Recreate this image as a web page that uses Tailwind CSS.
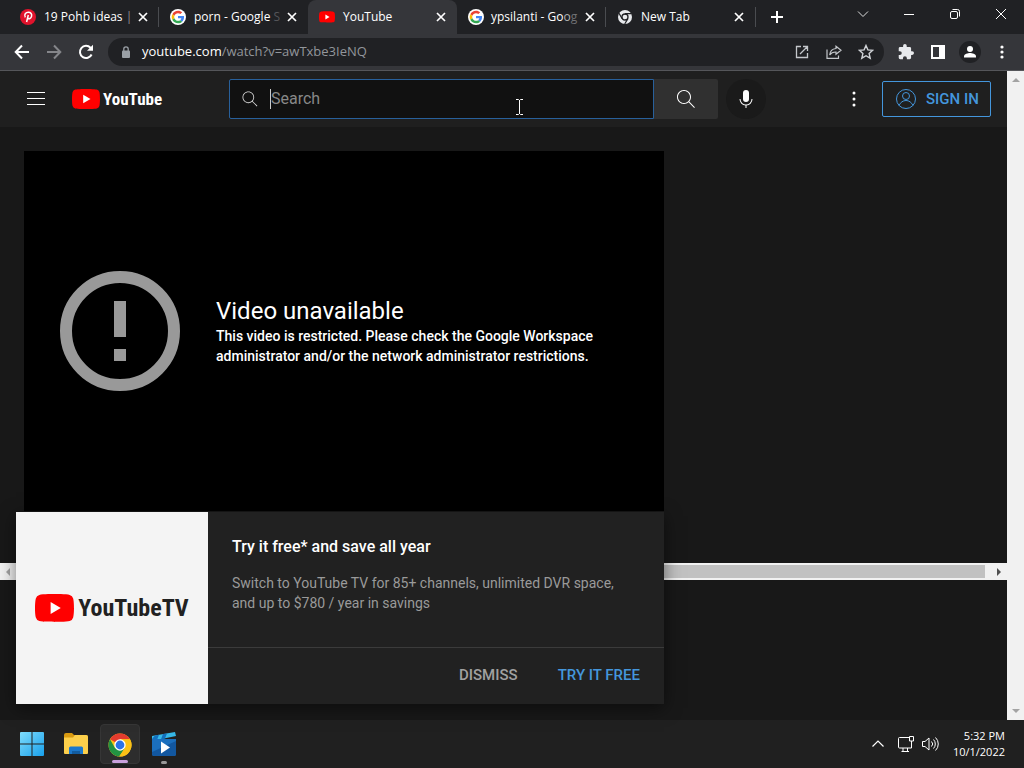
<!DOCTYPE html>
<html lang="en">
<head>
    <meta charset="UTF-8">
    <meta name="viewport" content="width=device-width, initial-scale=1.0">
    <title>YouTube</title>
    <script src="https://cdn.jsdelivr.net/npm/@tailwindcss/browser@4"></script>
</head>
<body class="h-screen flex flex-col overflow-hidden bg-[#181818] text-white font-['Roboto',sans-serif]">

    <!-- Shared icons -->
    <svg class="hidden">
        <symbol id="close" viewBox="0 0 10 10"><path d="M1 1l8 8M9 1l-8 8" stroke="currentColor" stroke-width="1.7" fill="none"/></symbol>
        <symbol id="google" viewBox="0 0 48 48">
            <circle cx="24" cy="24" r="24" fill="#fff"/>
            <g transform="translate(5 5) scale(.79)">
                <path fill="#EA4335" d="M24 9.5c3.5 0 6.700 1.200 9.200 3.600l6.900-6.900C35.900 2.400 30.500 0 24 0 14.600 0 6.500 5.400 2.600 13.200l8 6.200C12.400 13.700 17.700 9.500 24 9.500z"/>
                <path fill="#4285F4" d="M47 24.500c0-1.600-.2-3.100-.4-4.500H24v9h12.900c-.6 3-2.300 5.500-4.800 7.200l7.700 6C44.400 38 47 31.800 47 24.500z"/>
                <path fill="#FBBC05" d="M10.500 28.600c-.5-1.500-.8-3-.8-4.600s.3-3.100.8-4.600l-8-6.200C.9 16.500 0 20.100 0 24s.9 7.500 2.600 10.800z"/>
                <path fill="#34A853" d="M24 48c6.500 0 11.900-2.100 15.900-5.800l-7.700-6c-2.200 1.500-4.900 2.300-8.200 2.300-6.300 0-11.600-4.200-13.500-9.900l-8 6.200C6.500 42.600 14.600 48 24 48z"/>
            </g>
        </symbol>
        <symbol id="play" viewBox="0 0 28 20">
            <path fill="#f00" d="M27.400 3.100A3.500 3.500 0 0 0 24.900.6C22.700 0 14 0 14 0S5.300 0 3.100.6A3.500 3.500 0 0 0 .6 3.100C0 5.300 0 10 0 10s0 4.700.6 6.900a3.500 3.500 0 0 0 2.500 2.500C5.300 20 14 20 14 20s8.700 0 10.900-.6a3.500 3.500 0 0 0 2.500-2.500C28 14.700 28 10 28 10s0-4.700-.6-6.900z"/>
            <path fill="#fff" d="M11.200 14.300V5.700l7.300 4.300z"/>
        </symbol>
        <symbol id="search" viewBox="0 0 24 24"><path fill="currentColor" d="M20.870 20.170l-5.590-5.590C16.350 13.350 17 11.750 17 10c0-3.870-3.130-7-7-7s-7 3.130-7 7 3.130 7 7 7c1.750 0 3.350-.65 4.580-1.710l5.590 5.590.7-.71zM10 16c-3.310 0-6-2.690-6-6s2.690-6 6-6 6 2.690 6 6-2.690 6-6 6z"/></symbol>
    </svg>

    <!-- Tab strip -->
    <div class="h-[34px] shrink-0 flex bg-[#202124] pl-[10px] text-xs font-['Open_Sans',sans-serif]">
        <div class="w-[149px] flex items-center pl-[10px] pr-[11px]">
            <svg class="w-4 h-4 shrink-0" viewBox="0 0 16 16"><circle cx="8" cy="8" r="8" fill="#e0132c"/><path d="M5.300 8.300C3.700 5.500 5.800 3.300 8.300 3.300c2.700 0 3.700 1.900 3.300 3.800-.5 2.500-2.700 3.400-3.900 1.900M8.300 6L6.600 13" fill="none" stroke="#fff" stroke-width="1.500"/></svg>
            <span class="ml-2 whitespace-nowrap">19 Pohb ideas <span class="text-[#909194]">|</span></span>
            <button aria-label="Close tab" class="ml-auto"><svg class="w-[10px] h-[10px]"><use href="#close"/></svg></button>
        </div>
        <div class="w-[149px] flex items-center pl-[11px] pr-[11px]">
            <div class="absolute w-px h-5 bg-[#4a4c50] -ml-3"></div>
            <svg class="w-4 h-4 shrink-0"><use href="#google"/></svg>
            <span class="ml-2 whitespace-nowrap">porn - Google <span class="text-[#55565a]">S</span></span>
            <button aria-label="Close tab" class="ml-auto"><svg class="w-[10px] h-[10px]"><use href="#close"/></svg></button>
        </div>
        <div class="w-[149px] flex items-center pl-[11px] pr-[11px] bg-[#35363a] rounded-t-lg">
            <svg class="w-4 h-[12px] shrink-0"><use href="#play"/></svg>
            <span class="ml-2 whitespace-nowrap">YouTube</span>
            <button aria-label="Close tab" class="ml-auto"><svg class="w-[10px] h-[10px]"><use href="#close"/></svg></button>
        </div>
        <div class="w-[149px] flex items-center pl-[11px] pr-[11px]">
            <svg class="w-4 h-4 shrink-0"><use href="#google"/></svg>
            <span class="ml-[7px] whitespace-nowrap">ypsilanti - Go<span class="text-[#b0b1b3]">o</span><span class="text-[#707174]">g</span></span>
            <button aria-label="Close tab" class="ml-auto"><svg class="w-[10px] h-[10px]"><use href="#close"/></svg></button>
        </div>
        <div class="w-[149px] flex items-center pl-[11px] pr-[11px]">
            <div class="absolute w-px h-5 bg-[#4a4c50] -ml-3"></div>
            <svg class="w-4 h-4 shrink-0" viewBox="0 0 16 16"><circle cx="8" cy="8" r="7" fill="#e8eaed"/><circle cx="8" cy="8" r="3" fill="#e8eaed" stroke="#202124" stroke-width="1.300"/><path d="M8 4.700h6.500M5.100 9.600L2 4.200M10.900 9.600L7.700 15" stroke="#202124" stroke-width="1.200"/></svg>
            <span class="ml-2 whitespace-nowrap">New Tab</span>
            <button aria-label="Close tab" class="ml-auto"><svg class="w-[10px] h-[10px]"><use href="#close"/></svg></button>
        </div>
        <div class="w-px h-5 bg-[#4a4c50] self-center"></div>
        <button aria-label="New tab" class="ml-[14px]"><svg class="w-[14px] h-[14px]" viewBox="0 0 14 14"><path d="M7 1v12M1 7h12" stroke="#fff" stroke-width="2"/></svg></button>
        <div class="ml-auto flex items-center pr-[17px] pb-[6px]">
            <button aria-label="Search tabs"><svg class="w-3 h-3" viewBox="0 0 12 12"><path d="M1 3.500l5 5 5-5" fill="none" stroke="#ddd"/></svg></button>
            <button aria-label="Minimize" class="ml-[34px]"><svg class="w-3 h-3" viewBox="0 0 12 12"><path d="M1 6.500h10" stroke="#fff"/></svg></button>
            <button aria-label="Restore" class="ml-[34px]"><svg class="w-3 h-3" viewBox="0 0 12 12"><rect x="1.500" y="3.500" width="7" height="7" rx="1.500" fill="none" stroke="#fff"/><path d="M3.500 1.500H8.500a2 2 0 0 1 2 2V8.500" fill="none" stroke="#fff"/></svg></button>
            <button aria-label="Close window" class="ml-[34px]"><svg class="w-3 h-3" viewBox="0 0 12 12"><path d="M1 1l10 10M11 1L1 11" stroke="#fff"/></svg></button>
        </div>
    </div>

    <!-- Toolbar -->
    <div class="h-[37px] shrink-0 flex items-center bg-[#35363a] border-b border-[#55565a] pl-[14px] pr-[14px] gap-4 text-[#e8eaed]">
        <button aria-label="Back"><svg class="w-4 h-4" viewBox="0 0 16 16"><path d="M15 8H2M8 1.500L1.700 8 8 14.500" fill="none" stroke="#fff" stroke-width="2"/></svg></button>
        <button aria-label="Forward"><svg class="w-4 h-4" viewBox="0 0 16 16"><path d="M1 8h13M8 1.500L14.300 8 8 14.500" fill="none" stroke="#85868a" stroke-width="2"/></svg></button>
        <button aria-label="Reload"><svg class="w-4 h-4" viewBox="0 0 16 16"><path d="M13.600 10.500A6.100 6.100 0 1 1 12.500 3.800l1.500 1.700" fill="none" stroke="#fff" stroke-width="2"/><path d="M15 .8v6H9z" fill="#fff"/></svg></button>
        <div class="flex-1 h-7 -ml-[2px] -mr-[2px] flex items-center rounded-full bg-[#202124] pl-3 pr-[10px] font-['Open_Sans',sans-serif]">
            <svg class="w-3 h-3 shrink-0" viewBox="0 0 12 12"><rect x="2" y="4.500" width="8" height="7.500" rx="1" fill="#9aa0a6"/><path d="M3.800 5V3a2.200 2.200 0 0 1 4.400 0v2" fill="none" stroke="#9aa0a6" stroke-width="1.300"/></svg>
            <span class="ml-[10px] text-[13px] flex-1 text-[#92969b]"><span class="text-white">youtube.com</span>/watch?v=awTxbe3IeNQ</span>
            <div class="flex gap-4">
                <svg class="w-4 h-4" viewBox="0 0 16 16" fill="none" stroke="#c4c7cb" stroke-width="1.300"><path d="M7 2.500H2.500v11h11V9M9 2.500h4.500V7M13.500 2.500L6 10"/></svg>
                <svg class="w-4 h-4" viewBox="0 0 16 16" fill="none" stroke="#c4c7cb" stroke-width="1.200"><path d="M1 5.500v8.900h11.500V11.500M10 2.200l5 4-5 4V8C7 7.900 5 9 3.700 11 4 7.500 6.200 4.900 10 4.500z"/></svg>
                <svg class="w-4 h-4" viewBox="0 0 16 16" fill="none" stroke="#d0d3d7" stroke-width="1.400"><path d="M8 1.500l1.900 4.400 4.800.4-3.600 3.200 1.100 4.700L8 11.700l-4.200 2.500 1.100-4.700L1.300 6.300l4.800-.4z"/></svg>
            </div>
        </div>
        <button aria-label="Extensions"><svg class="w-4 h-4" viewBox="1 1 22 22"><path fill="#e8eaed" d="M20.500 11H19V7a2 2 0 0 0-2-2h-4V3.500a2.500 2.500 0 0 0-5 0V5H4a2 2 0 0 0-2 2v3.800h1.500a2.700 2.700 0 0 1 0 5.400H2V20a2 2 0 0 0 2 2h3.800v-1.500a2.700 2.700 0 0 1 5.400 0V22H17a2 2 0 0 0 2-2v-4h1.500a2.500 2.500 0 0 0 0-5z"/></svg></button>
        <button aria-label="Side panel"><svg class="w-4 h-4" viewBox="0 0 16 16"><path fill="#fff" fill-rule="evenodd" d="M1 1h14v14H1zM3 3v10h6V3z"/></svg></button>
        <button aria-label="Profile" class="-mx-[3px]"><svg class="w-[22px] h-[22px]" viewBox="0 0 22 22"><circle cx="11" cy="11" r="11" fill="#202124"/><circle cx="11" cy="8" r="3" fill="#fff"/><path d="M5 16.500v-1.300c0-2 4-3.100 6-3.100s6 1.100 6 3.100v1.300z" fill="#fff"/></svg></button>
        <button aria-label="Menu"><svg class="w-4 h-4" viewBox="0 0 16 16" fill="#fff"><circle cx="8" cy="3" r="1.600"/><circle cx="8" cy="8" r="1.600"/><circle cx="8" cy="13" r="1.600"/></svg></button>
    </div>

    <!-- Page -->
    <div class="flex-1 min-h-0 flex">
        <div class="relative flex-1 min-w-0 flex flex-col">
            <header class="h-14 shrink-0 flex items-center px-4 bg-[#1f1f1f]">
                <div class="w-[213px] shrink-0 flex items-center pl-2">
                    <button aria-label="Guide"><svg class="w-6 h-6" viewBox="0 0 24 24"><path d="M3 5.500h18M3 11.500h18M3 17.500h18" stroke="#fff"/></svg></button>
                    <a href="#" aria-label="YouTube home" class="ml-6 flex items-center gap-[3px]">
                        <svg class="w-7 h-5"><use href="#play"/></svg>
                        <span class="text-[17px] leading-5 font-bold font-['Liberation_Sans_Narrow','Roboto_Condensed',sans-serif]">YouTube</span>
                    </a>
                </div>
                <form class="flex-1 flex h-10">
                    <label class="flex-1 min-w-0 flex items-center bg-[#111111] border border-[#28609b] rounded-l-xs">
                        <svg class="w-5 h-5 ml-[10px] shrink-0 text-[#ddd]"><use href="#search"/></svg>
                        <input type="text" aria-label="Search" placeholder="Search" class="ml-[10px] flex-1 min-w-0 bg-transparent border-l border-[#ccc] h-5 text-base outline-none placeholder:text-[#888]">
                    </label>
                    <button type="button" aria-label="Search" class="w-16 flex items-center justify-center bg-[#303030] rounded-r-xs"><svg class="w-6 h-6"><use href="#search"/></svg></button>
                </form>
                <button aria-label="Search with your voice" class="ml-2 w-10 h-10 rounded-full bg-[#1a1a1a] flex items-center justify-center"><svg class="w-6 h-6" viewBox="0 0 24 24" fill="#fff"><rect x="9" y="3" width="6" height="12" rx="3"/><path d="M18.500 12h-1a5.500 5.500 0 0 1-11 0h-1a6.500 6.500 0 0 0 6 6.500V21h1v-2.500a6.500 6.500 0 0 0 6-6.500z"/></svg></button>
                <div class="w-[225px] shrink-0 flex items-center justify-end gap-4">
                    <button aria-label="Settings"><svg class="w-6 h-6" viewBox="0 0 24 24" fill="#fff"><circle cx="12" cy="6" r="1.500"/><circle cx="12" cy="12" r="1.500"/><circle cx="12" cy="18" r="1.500"/></svg></button>
                    <a href="#" class="w-[109px] h-9 flex items-center gap-2 pl-[11px] whitespace-nowrap border border-[#4496dc] rounded-xs text-[15px] font-medium text-[#4496dc]">
                        <svg class="w-6 h-6 shrink-0" viewBox="0 0 24 24" fill="none" stroke="currentColor"><circle cx="12" cy="12" r="9.500"/><circle cx="12" cy="9" r="3.500"/><path d="M5 18.500c1.500-3.200 4-5 7-5s5.500 1.800 7 5"/></svg>
                        SIGN IN
                    </a>
                </div>
            </header>

            <main class="flex-1 min-h-0 flex flex-col">
                <div class="h-[436px] shrink-0 overflow-hidden pt-6 pl-6">
                    <section class="w-[640px] h-[360px] bg-black flex items-center gap-9 pl-9">
                        <svg class="w-[120px] h-[120px] shrink-0" viewBox="0 0 120 120"><circle cx="60" cy="60" r="54" fill="none" stroke="#999" stroke-width="12"/><path d="M54 30h12v36H54zM54 78h12v12H54z" fill="#999"/></svg>
                        <div>
                            <h1 class="text-2xl leading-[30px]">Video unavailable</h1>
                            <p class="w-[400px] text-sm leading-5 font-medium">This video is restricted. Please check the Google Workspace administrator and/or the network administrator restrictions.</p>
                        </div>
                    </section>
                </div>
                <!-- Horizontal scrollbar -->
                <div class="h-[17px] shrink-0 flex items-center justify-between bg-[#f1f1f1] px-[5px]">
                    <svg class="w-[6px] h-2" viewBox="0 0 6 8"><path d="M5 0v8L1 4z" fill="#a3a3a3"/></svg>
                    <div class="flex-1 h-[13px] ml-[6px] mr-[11px] bg-[#c1c1c1]"></div>
                    <svg class="w-[6px] h-2" viewBox="0 0 6 8"><path d="M1 0v8l4-4z" fill="#505050"/></svg>
                </div>
            </main>

            <!-- Promo dialog -->
            <section class="absolute left-4 bottom-4 w-[648px] h-48 flex bg-[#212121] shadow-[0_4px_16px_#00000080]">
                <div class="w-48 shrink-0 bg-[#f4f4f4] flex items-center justify-center gap-1 text-[#212121]">
                    <svg class="w-[39px] h-7"><use href="#play"/></svg>
                    <span class="text-[24px] leading-7 font-bold font-['Liberation_Sans_Narrow','Roboto_Condensed',sans-serif]">YouTubeTV</span>
                </div>
                <div class="flex-1 flex flex-col">
                    <div class="flex-1 px-6 pt-6">
                        <h2 class="text-base leading-[22px] font-medium">Try it free* and save all year</h2>
                        <p class="mt-[15px] text-sm leading-5 text-[#9a9a9a]">Switch to YouTube TV for 85+ channels, unlimited DVR space, and up to $780 / year in savings</p>
                    </div>
                    <div class="h-[57px] border-t border-[#3b3b3b] flex items-center justify-end gap-10 pr-6 pb-[2px] text-[15px] font-medium">
                        <button class="text-[#a0a0a0]">DISMISS</button>
                        <button class="text-[#4496dc]">TRY IT FREE</button>
                    </div>
                </div>
            </section>

            <!-- Text cursor -->
            <svg class="absolute left-[515px] top-[28px] w-[9px] h-4" viewBox="0 0 9 16"><path d="M1 .5h2.500l1 1 1-1H8M4.500 1v14M1 15.500h2.500l1-1 1 1H8" fill="none" stroke="#fff"/></svg>
        </div>

        <!-- Vertical scrollbar -->
        <div class="w-[17px] shrink-0 flex flex-col items-center justify-between bg-[#f1f1f1] py-[6px]">
            <svg class="w-2 h-[6px]" viewBox="0 0 8 6"><path d="M0 5h8L4 1z" fill="#a3a3a3"/></svg>
            <svg class="w-2 h-[6px]" viewBox="0 0 8 6"><path d="M0 1h8L4 5z" fill="#a3a3a3"/></svg>
        </div>
    </div>

    <!-- Taskbar -->
    <footer class="h-12 shrink-0 flex items-center bg-[#202020] pl-3 pr-[19px] font-['Open_Sans',sans-serif]">
        <div class="flex gap-1">
            <button aria-label="Start" class="w-10 h-10 flex items-center justify-center">
                <svg class="w-6 h-6" viewBox="0 0 24 24">
                    <defs><linearGradient id="win" x2="1" y2="1" gradientUnits="userSpaceOnUse" gradientTransform="scale(24)"><stop stop-color="#7fdcfb"/><stop offset="1" stop-color="#18a0ec"/></linearGradient></defs>
                    <path fill="url(#win)" d="M1 0h10.500v11.500H0V1a1 1 0 0 1 1-1zM12.500 0H23a1 1 0 0 1 1 1v10.500H12.500zM0 12.500h11.500V24H1a1 1 0 0 1-1-1zM12.500 12.500H24V23a1 1 0 0 1-1 1H12.500z"/>
                </svg>
            </button>
            <button aria-label="File Explorer" class="w-10 h-10 flex items-center justify-center">
                <svg class="w-6 h-6" viewBox="0 0 24 24"><path d="M0 3a2 2 0 0 1 2-2h6l2 2h12a2 2 0 0 1 2 2v4H0z" fill="#d99a10"/><path d="M0 5.500h9L11 3h11a2 2 0 0 1 2 2v16a1 1 0 0 1-1 1H1a1 1 0 0 1-1-1z" fill="#fccf4b"/><path d="M5 22v-6a1.500 1.500 0 0 1 1.500-1.500h11A1.500 1.500 0 0 1 19 16v6z" fill="#1b78cc"/><path d="M8 19h8v3H8z" fill="#135c9f"/></svg>
            </button>
            <button aria-label="Google Chrome" class="w-10 h-10 flex flex-col items-center justify-between pt-2 rounded bg-[#2d2d2d] border border-[#363636]">
                <svg class="w-6 h-6" viewBox="0 0 24 24"><circle cx="12" cy="12" r="11.500" fill="#fbc116"/><path d="M12 12L2 6.300A11.500 11.500 0 0 1 22 6.300H12z" fill="#e33b2e"/><path d="M2 6.300A11.500 11.500 0 0 0 11.200 23.500L17 14.800 12 12 7 14.900z" fill="#229342"/><path d="M12 6.300h10a11.500 11.500 0 0 1-10.800 17.200L17 14.900z" fill="#fbc116"/><circle cx="12" cy="12" r="5.700" fill="#fff"/><circle cx="12" cy="12" r="4.400" fill="#2a72e8"/></svg>
                <span class="w-4 h-[3px] rounded-full bg-[#c9a0dc]"></span>
            </button>
            <button aria-label="Movies &amp; TV" class="w-10 h-10 flex flex-col items-center justify-between pt-2">
                <svg class="w-6 h-6" viewBox="0 0 24 24"><path d="M0 4L23 0l1 4-24 5z" fill="#36b8e8"/><path d="M3 3.500l4-.7L5 8l-5 .8V7zM11 2.100l4-.7L13 6.400l-4 .8z" fill="#1370bd"/><path d="M0 7h24v15a2 2 0 0 1-2 2H2a2 2 0 0 1-2-2z" fill="#1b6fbe"/><path d="M0 20L24 9v13a2 2 0 0 1-2 2H2a2 2 0 0 1-2-2z" fill="#1257a0"/><path d="M9 9.500v12l9-6z" fill="#fff"/></svg>
                <span class="w-[6px] h-[3px] rounded-full bg-[#999]"></span>
            </button>
        </div>
        <div class="ml-auto flex items-center">
            <svg class="w-3 h-3" viewBox="0 0 12 12"><path d="M.5 8.500L6 3l5.500 5.500" fill="none" stroke="#fff" stroke-width="1.200"/></svg>
            <svg class="w-[18px] h-4 ml-[13px]" viewBox="0 0 18 16" fill="none" stroke="#fff"><path d="M12 1.500H2.500a1 1 0 0 0-1 1v8.500a1 1 0 0 0 1 1h12V8M6 12v3.500M10.500 12v3.500M4.500 15.500H12M12.500.5h4V5h-4zM14.500 5v3"/></svg>
            <svg class="w-[18px] h-4 ml-[6px]" viewBox="0 0 18 16" fill="none" stroke="#fff"><path d="M1.500 5.500H4L8 2v12l-4-3.500H1.500zM10.500 5.500a3.500 3.500 0 0 1 0 5M12.500 3.500a6.500 6.500 0 0 1 0 9M14.500 1.500a9 9 0 0 1 0 13"/></svg>
            <div class="ml-[14px] text-[11px] leading-4 text-right whitespace-nowrap">5:32 PM<br>10/1/2022</div>
        </div>
    </footer>
</body>
</html>
